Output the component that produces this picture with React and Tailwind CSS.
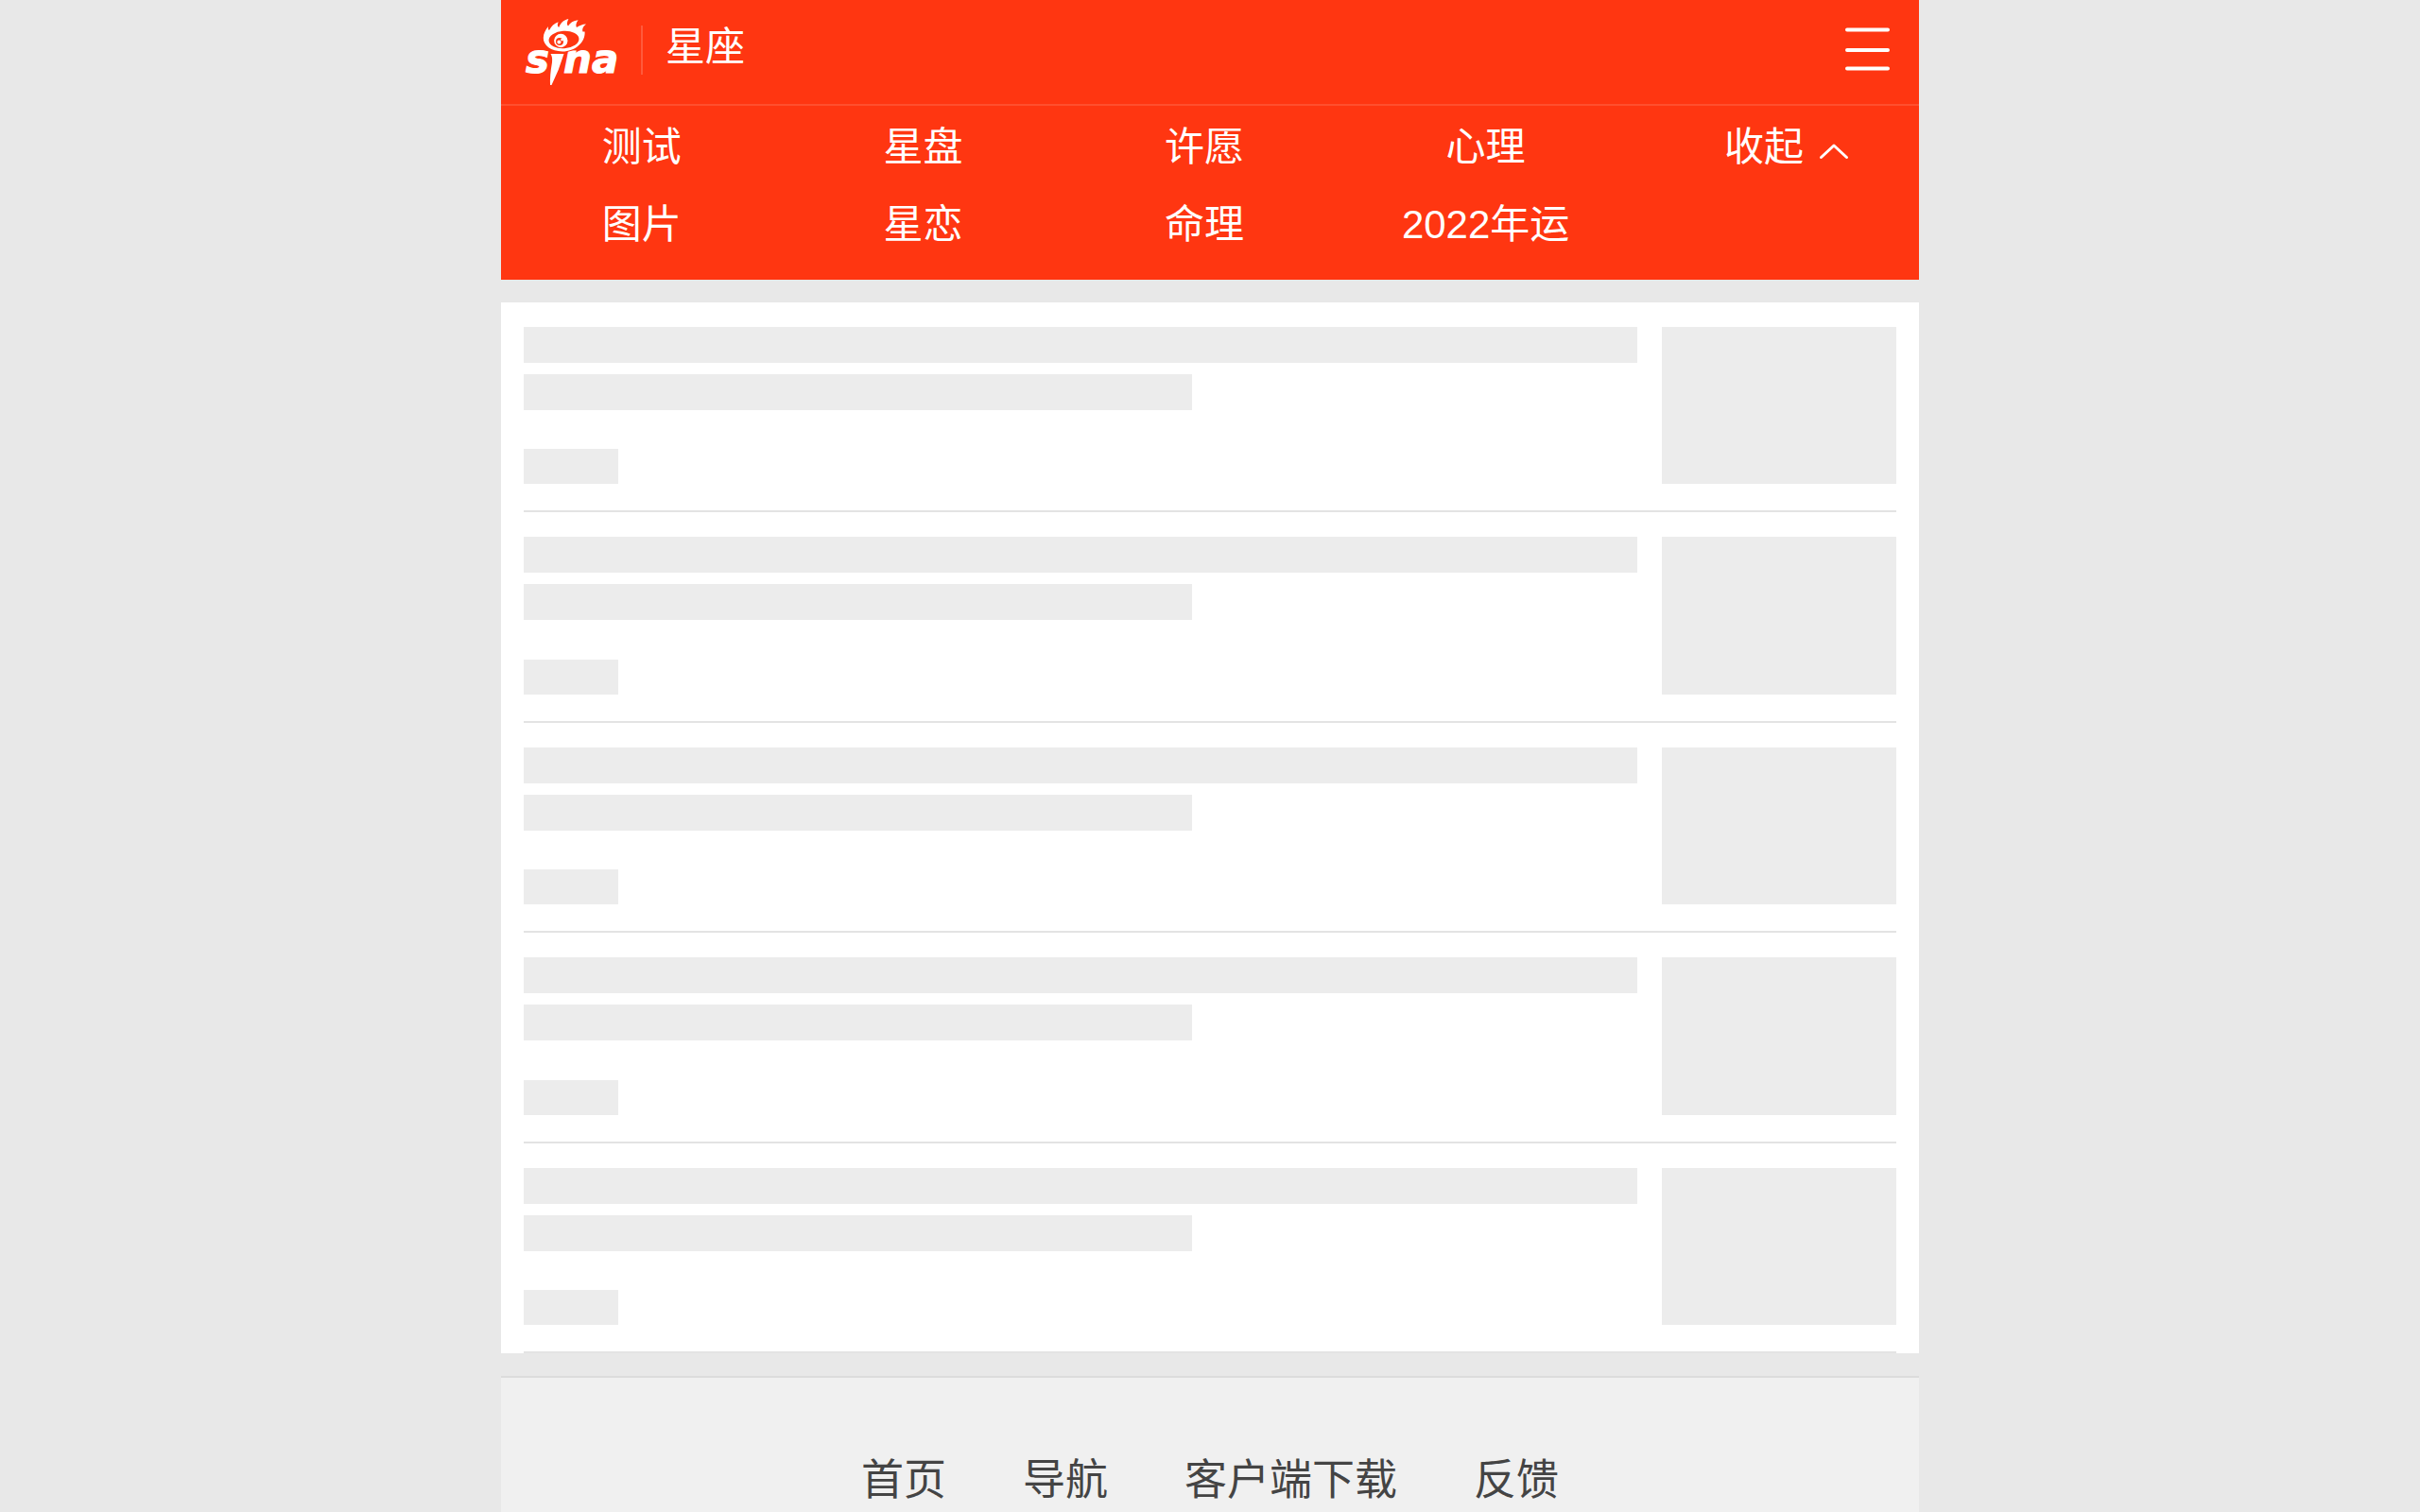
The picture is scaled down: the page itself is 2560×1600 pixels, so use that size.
const NAV = ['测试', '星盘', '许愿', '心理', null, '图片', '星恋', '命理', '2022年运'];
const FOOTER = ['首页', '导航', '客户端下载', '反馈'];

function SinaLogo() {
  return (
    <svg viewBox="0 0 104 80" className="h-20 w-[104px]" fill="#fff" aria-hidden="true">
      <text x="2" y="64" fontFamily="DejaVu Sans" fontWeight="700" fontStyle="italic" fontSize="42" stroke="#fff">s</text>
      <text x="42" y="64" fontFamily="DejaVu Sans" fontWeight="700" fontStyle="italic" fontSize="42" stroke="#fff">na</text>
      <path d="M28.5 44 L42.5 44 Q37.5 61 29.5 77 L28 77 Q27.5 67 30 53 Q30.6 47 28.5 44 Z" stroke="#ff3611" strokeWidth="2" paintOrder="stroke" />
      <g transform="translate(0 -1)">
        <path
          d="M41 42.4 C29 42.4 20.6 36 20.8 28 C21 23 23 20 26 16 C25.6 18.5 26 19.6 27 20 C29.5 15.5 32 13 36.6 11.3 C35.4 14 35.6 16 37.2 17 C39 12 42.5 9 47.4 8 C45.6 11.5 45.4 14 47 15.4 C49 12 52.5 9.8 57.6 9.2 C55.2 12.5 54.8 15 56 17 C58.5 15 62 13.6 66 13.4 C62.5 16 61.6 19 62.4 21.6 L64.6 21.4 C65.4 33 54 42.4 41 42.4 Z"
          stroke="#ff3611"
          strokeWidth="2"
          paintOrder="stroke"
        />
        <ellipse cx="42.5" cy="30" rx="16" ry="9.2" fill="#ff3611" transform="rotate(-4 42.5 30)" />
        <circle cx="39.3" cy="31" r="7.2" />
        <circle cx="38" cy="32" r="4" fill="#ff3611" />
        <circle cx="37.4" cy="32.6" r="2" />
        <circle cx="40.6" cy="30" r="1.4" />
      </g>
    </svg>
  );
}

function SkeletonItem() {
  return (
    <li className="flex gap-[26px] border-b-2 border-[#e3e3e3] pt-[26px] pb-7">
      <div className="flex flex-1 flex-col">
        <div className="h-[38px] bg-[#ececec]" />
        <div className="mt-3 h-[38px] w-3/5 bg-[#ececec]" />
        <div className="mt-auto h-[37px] w-[100px] bg-[#ececec]" />
      </div>
      <div className="aspect-[1240/832] w-[248px] bg-[#ececec]" />
    </li>
  );
}

export default function App() {
  return (
    <div className="min-h-screen bg-[#e8e8e8] font-['Liberation_Sans','Noto_Sans_CJK_SC',sans-serif]">
      <div className="mx-auto flex min-h-screen max-w-[1500px] flex-col">
        <header className="bg-[#ff3611] pb-[17px] text-[42px] text-white">
          <div className="flex h-28 items-center border-b-2 border-[#ff4f2e] pr-[31px] pb-1 pl-6">
            <a href="#sina" aria-label="sina">
              <SinaLogo />
            </a>
            <span className="ml-5 h-[52px] w-0.5 bg-[#ff5a3b]" />
            <h1 className="ml-6 pb-1.5 leading-[60px]">星座</h1>
            <button type="button" aria-label="菜单" className="ml-auto pb-0.5">
              <svg viewBox="0 0 47 46" className="h-[46px] w-[47px]" stroke="#fff" strokeWidth="4" strokeLinecap="round" aria-hidden="true">
                <path d="M2 2.5H45M2 24H45M2 43.5H45" />
              </svg>
            </button>
          </div>
          <nav className="grid grid-cols-5 pt-[3px] pr-3">
            {NAV.map((label) =>
              label ? (
                <a key={label} href="#nav" className="text-center leading-[82px]">
                  {label}
                </a>
              ) : (
                <button key="collapse" type="button" className="flex items-center justify-end gap-4 pr-[62px] leading-[82px]">
                  收起
                  <svg viewBox="0 0 32 18" className="mt-2 h-[18px] w-8" fill="none" stroke="#fff" strokeWidth="3" strokeLinecap="round" strokeLinejoin="round" aria-hidden="true">
                    <path d="M2.5 15.5L16 3L29.5 15.5" />
                  </svg>
                </button>
              )
            )}
          </nav>
        </header>
        <ul className="mt-6 bg-white px-6">
          {[1, 2, 3, 4, 5].map((n) => (
            <SkeletonItem key={n} />
          ))}
        </ul>
        <footer className="mt-6 flex-1 border-t-2 border-[#dcdcdc] bg-[#f0f0f0] pt-[76px] text-[#444]">
          <div className="flex justify-center gap-[81px] text-[45px] leading-[66px]">
            {FOOTER.map((label) => (
              <a key={label} href="#footer">
                {label}
              </a>
            ))}
          </div>
        </footer>
      </div>
    </div>
  );
}
